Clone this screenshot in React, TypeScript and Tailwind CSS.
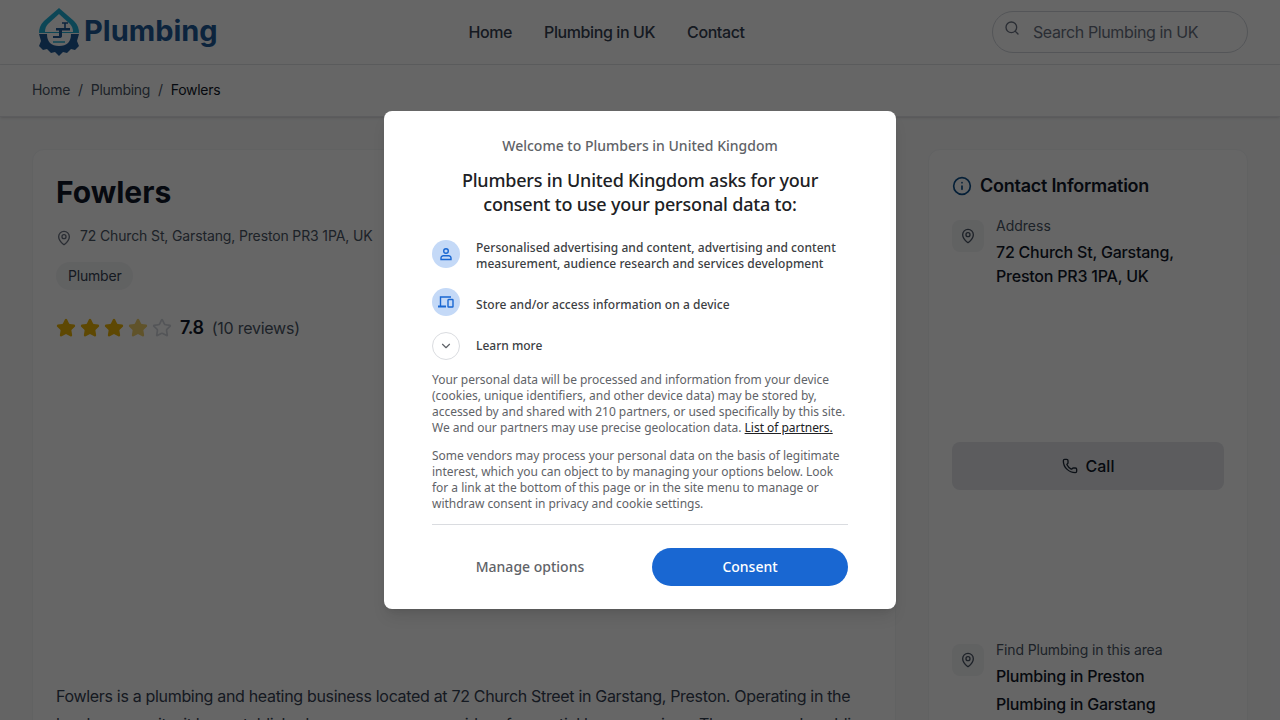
import { ChevronDown, Info, MapPin, Phone, Search, Star } from "lucide-react";

function PinTile() {
  return (
    <div className="mt-1 grid h-8 w-8 shrink-0 place-items-center rounded-lg bg-gray-100">
      <MapPin size={16} className="text-gray-600" />
    </div>
  );
}

function Logo() {
  return (
    <svg width="42" height="48" viewBox="0 0 42 48" className="shrink-0">
      <path d="M21 0 L36 13 Q41 18 41 25 L1 25 Q1 18 6 13 Z" fill="#1fb0d8" />
      <path d="M21 6 L32 16 Q35 19 35 24 L7 24 Q7 19 10 16 Z" fill="#ffffff" />
      <path d="M1 26 H41 L39 33 L41 38 L37 42 L33 41 L29 45 L25 44 L21 48 L17 44 L13 45 L9 41 L5 42 L1 38 L3 33 Z" fill="#1e5a9a" />
      <path d="M9 26 H33 Q33 38 21 38 Q9 38 9 26 Z" fill="#ffffff" />
      <path d="M18 20 H32 V22.5 H24 V28 Q24 30 21 30 H15 V28 H21 V22.5 H18 Z" fill="#1e5a9a" />
      <path d="M24 15 H30 M27 15 V20" stroke="#1e5a9a" strokeWidth="1.6" fill="none" />
      <path d="M15 34 H27" stroke="#1fb0d8" strokeWidth="1.5" />
    </svg>
  );
}

function Stars() {
  return (
    <div className="flex gap-1">
      {[1, 2, 3].map((n) => (
        <Star key={n} size={20} className="fill-[#eab308] text-[#eab308]" />
      ))}
      <Star size={20} className="fill-[#f0cf6a] text-[#f0cf6a]" />
      <Star size={20} className="text-gray-300" />
    </div>
  );
}

function Consent() {
  return (
    <div className="absolute inset-0 z-50 flex items-start justify-center bg-black/60 pt-[111px] font-['Noto_Sans','Open_Sans',sans-serif]">
      <div className="h-[498px] w-[512px] rounded-lg bg-white px-12 pt-[25px] shadow-lg">
        <p className="text-center text-[14px] leading-5 font-medium text-[#5f6368]">Welcome to Plumbers in United Kingdom</p>
        <h2 className="mx-auto mt-3 w-[400px] text-center text-[18px] leading-6 font-medium tracking-[-0.2px] text-[#202124]">
          Plumbers in United Kingdom asks for your consent to use your personal data to:
        </h2>
        <div className="mt-6 flex items-start gap-4">
          <div className="grid h-7 w-7 shrink-0 place-items-center rounded-full bg-[#c4d9f7]">
            <svg width="14" height="14" viewBox="0 0 14 14" fill="none" stroke="#1967d2" strokeWidth="1.4">
              <circle cx="7" cy="4" r="2.3" />
              <path d="M2 12.5 V10.8 Q2 9 4 8.7 H10 Q12 9 12 10.8 V12.5 Z" />
            </svg>
          </div>
          <p className="text-[12px] leading-4 font-medium tracking-[0.05px] text-[#3c4043]">
            Personalised advertising and content, advertising and content measurement, audience research and services development
          </p>
        </div>
        <div className="mt-4 flex items-start gap-4">
          <div className="grid h-7 w-7 shrink-0 place-items-center rounded-full bg-[#c4d9f7]">
            <svg width="16" height="14" viewBox="0 0 16 14" fill="none" stroke="#1967d2" strokeWidth="1.4">
              <path d="M2.5 11 V2 H13" />
              <path d="M0 11.5 H8" strokeWidth="2" />
              <rect x="10" y="4.5" width="5" height="7.5" rx="0.6" />
            </svg>
          </div>
          <p className="mt-[9px] text-[12px] leading-4 font-medium tracking-[0.05px] text-[#3c4043]">Store and/or access information on a device</p>
        </div>
        <div className="mt-4 flex items-start gap-4">
          <div className="grid h-7 w-7 shrink-0 place-items-center rounded-full border border-[#dadce0]">
            <ChevronDown size={14} className="text-[#5f6368]" />
          </div>
          <p className="mt-[6px] text-[12px] leading-4 font-medium text-[#3c4043]">Learn more</p>
        </div>
        <p className="mt-3 text-[12px] leading-4 tracking-[-0.03px] text-[#5f6368]">
          Your personal data will be processed and information from your device (cookies, unique identifiers, and other device data) may be stored by, accessed by and shared with 210 partners, or used specifically by this site. We and our partners may use precise geolocation data.{" "}
          <span className="text-[#202124] underline">List of partners.</span>
        </p>
        <p className="mt-3 text-[12px] leading-4 tracking-[-0.03px] text-[#5f6368]">
          Some vendors may process your personal data on the basis of legitimate interest, which you can object to by managing your options below. Look for a link at the bottom of this page or in the site menu to manage or withdraw consent in privacy and cookie settings.
        </p>
        <div className="mt-3 flex gap-6 border-t border-[#dadce0] pt-[23px]">
          <button className="h-[38px] w-[196px] rounded-full pb-[2px] text-[14px] font-medium text-[#5f6368]" type="button">
            Manage options
          </button>
          <button className="h-[38px] w-[196px] rounded-full bg-[#1967d2] pb-[2px] text-[14px] font-medium text-white" type="button">
            Consent
          </button>
        </div>
      </div>
    </div>
  );
}

export default function App() {
  return (
    <div className="relative h-[720px] w-full overflow-hidden bg-gray-50 font-['Inter',sans-serif] text-gray-900">
      <header className="flex h-[65px] items-center justify-between border-b border-gray-200 bg-white pr-8 pl-[38px] shadow-sm">
        <div className="flex w-[179px] items-center gap-1">
          <Logo />
          <span className="-mt-[4px] text-[29px] leading-none font-bold text-[#1e5a9a]">Plumbing</span>
        </div>
        <nav className="ml-1 flex gap-8 text-[16px] leading-6 font-medium tracking-[-0.4px] text-gray-700">
          <span>Home</span>
          <span>Plumbing in UK</span>
          <span>Contact</span>
        </nav>
        <div className="flex h-[42px] w-64 items-start gap-[13px] rounded-full border border-gray-300 pt-2 pl-[11px]">
          <Search size={16} className="text-gray-500" />
          <span className="text-[16px] leading-6 tracking-[-0.38px] text-gray-500">Search Plumbing in UK</span>
        </div>
      </header>
      <nav className="flex h-[52px] items-center gap-2 border-b border-gray-200 bg-white px-8 pb-[2px] text-[14px] tracking-[-0.3px] text-gray-600 shadow-sm">
        <span>Home</span>
        <span>/</span>
        <span>Plumbing</span>
        <span>/</span>
        <span className="text-gray-900">Fowlers</span>
      </nav>
      <main className="flex gap-8 px-8 pt-8">
        <section className="h-[700px] w-[864px] shrink-0 rounded-xl border border-gray-100 bg-white px-[23px] pt-6">
          <h1 className="text-[30px] leading-9 font-bold text-gray-900">Fowlers</h1>
          <div className="mt-4 flex items-center gap-2 text-[14px] leading-5 tracking-[-0.14px] text-gray-600">
            <MapPin size={16} className="mt-[3px] text-gray-500" />
            <span>72 Church St, Garstang, Preston PR3 1PA, UK</span>
          </div>
          <div className="mt-4 inline-block rounded-full bg-gray-100 px-3 py-1 text-[14px] leading-5 tracking-[-0.2px] text-gray-700">Plumber</div>
          <div className="mt-6 flex items-center gap-2">
            <Stars />
            <span className="text-[18px] leading-7 font-semibold tracking-[-0.4px] text-gray-900">7.8</span>
            <span className="text-[16px] leading-6 tracking-[-0.25px] text-gray-600">(10 reviews)</span>
          </div>
          <p className="mt-[340px] text-[16px] leading-[28px] tracking-[-0.32px] text-gray-700">
            Fowlers is a plumbing and heating business located at 72 Church Street in Garstang, Preston. Operating in the local community, it has established a presence as a provider of essential home services. The company's public
          </p>
        </section>
        <aside className="h-[700px] w-80 shrink-0 rounded-xl border border-gray-100 bg-white px-[23px] pt-[26px]">
          <div className="flex items-center gap-2">
            <Info size={20} className="text-[#0d4f8b]" />
            <h2 className="text-[18px] leading-5 font-semibold tracking-[-0.25px] text-gray-900">Contact Information</h2>
          </div>
          <div className="mt-5 flex gap-3">
            <PinTile />
            <div>
              <p className="text-[14px] leading-5 text-gray-600">Address</p>
              <p className="mt-1 text-[16px] leading-6 font-medium tracking-[-0.22px] text-gray-900">72 Church St, Garstang, Preston PR3 1PA, UK</p>
            </div>
          </div>
          <button className="mt-[154px] flex h-12 w-full items-center justify-center gap-2 rounded-lg bg-gray-200 text-[16px] font-medium text-gray-900" type="button">
            <Phone size={16} className="text-gray-800" />
            Call
          </button>
          <div className="mt-[150px] flex gap-3">
            <PinTile />
            <div>
              <p className="text-[14px] leading-5 tracking-[-0.15px] text-gray-600">Find Plumbing in this area</p>
              <p className="mt-1 text-[16px] leading-6 font-medium tracking-[-0.22px] text-gray-900">Plumbing in Preston</p>
              <p className="mt-1 text-[16px] leading-6 font-medium tracking-[-0.22px] text-gray-900">Plumbing in Garstang</p>
            </div>
          </div>
        </aside>
      </main>
      <Consent />
    </div>
  );
}
